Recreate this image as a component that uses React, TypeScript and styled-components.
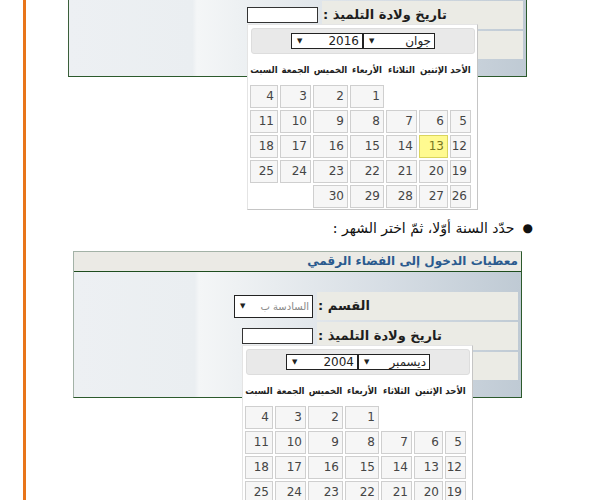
import styled, { createGlobalStyle } from 'styled-components';

const GlobalStyle = createGlobalStyle`
  html, body {
    margin: 0;
    padding: 0;
    background: #fff;
    overflow: hidden;
  }
  body {
    font-family: "DejaVu Sans", "Liberation Sans", sans-serif;
    color: #222;
  }
`;

const Page = styled.div`
  margin-left: 23px;
  border-left: 3px solid #e8751a;
  height: 500px;
  overflow: hidden;
`;

const Shot = styled.div<{ $left: number; $width: number; $tail: number; $top?: number }>`
  margin-left: ${p => p.$left}px;
  margin-top: ${p => p.$top ?? 0}px;
  width: ${p => p.$width}px;
  padding-bottom: ${p => p.$tail}px;
`;

const Panel = styled.div<{ $edge: string; $cut?: boolean }>`
  direction: rtl;
  border: 1px solid #2c5a2c;
  border-left-color: ${p => p.$edge};
  border-top: ${p => (p.$cut ? 'none' : `1px solid ${p.$edge}`)};
  background: linear-gradient(
    to right,
    #edf0f3 0%,
    #eaeef1 27%,
    #f4f6f7 28%,
    #e8ecef 45%,
    #d6dde4 70%,
    #bfcad4 100%
  );
`;

const PanelHead = styled.div`
  height: 19px;
  line-height: 19px;
  padding-right: 3px;
  background: #ebeae5;
  border-bottom: 1px solid #1e4d1e;
  color: #2a5a8e;
  font-size: 12px;
  font-weight: bold;
`;

const PanelBody = styled.div<{ $top: number }>`
  display: flex;
  flex-direction: column;
  gap: 2px;
  padding: ${p => p.$top}px 3px 17px 0;
`;

const Row = styled.div`
  display: flex;
  align-items: center;
  gap: 4px;
  height: 28px;
`;

const LabelCell = styled.div`
  width: 201px;
  height: 100%;
  box-sizing: border-box;
  padding-left: 1px;
  background: #ebebe5;
  text-align: left;
  line-height: 28px;
  font-size: 13px;
  font-weight: bold;
  color: #1e1e1e;
  white-space: nowrap;
`;

const Field = styled.div`
  position: relative;
  display: flex;
`;

const TextBox = styled.div`
  width: 71px;
  height: 16px;
  box-sizing: border-box;
  border: 1px solid #333;
  background: #fff;
`;

const Select = styled.div<{ $w: number; $h: number; $muted?: boolean }>`
  display: flex;
  align-items: center;
  justify-content: space-between;
  width: ${p => p.$w}px;
  height: ${p => p.$h}px;
  box-sizing: border-box;
  padding: 0 3px 0 5px;
  border: 1px solid #222;
  background: #fff;
  color: ${p => (p.$muted ? '#888' : '#222')};
  font-size: ${p => (p.$h > 20 ? 10 : 12)}px;
  white-space: nowrap;
`;

const Arrow = styled.span`
  font-size: 7px;
  color: #222;
`;

const Popup = styled.div`
  position: absolute;
  top: calc(100% + 1px);
  left: 0;
  z-index: 2;
  width: 231px;
  box-sizing: border-box;
  padding: 3px 2px 1px 2px;
  background: #fff;
  border: 1px solid #c5c5c5;
  border-top-color: #e4e4e4;
  border-left-color: #e4e4e4;
`;

const PopHead = styled.div`
  display: flex;
  justify-content: center;
  align-items: center;
  height: 26px;
  box-sizing: border-box;
  margin-left: 1px;
  border: 1px solid #ddd;
  border-radius: 3px;
  background: #e9e9e9;
`;

const COLS = '21px 29px 31px 34px 35px 31px 28px';

const WeekHead = styled.div`
  display: grid;
  grid-template-columns: ${COLS};
  column-gap: 2px;
  width: 221px;
  margin: 6px auto 0 0;
  height: 20px;
  line-height: 20px;
  font-family: "DejaVu Sans Condensed", "DejaVu Sans", sans-serif;
  font-stretch: condensed;
  font-size: 9.5px;
  font-weight: bold;
  color: #222;
`;

const WeekName = styled.div`
  display: flex;
  justify-content: center;
  white-space: nowrap;
`;

const Days = styled.div`
  display: grid;
  grid-template-columns: ${COLS};
  gap: 2px;
  width: 221px;
  margin: 5px auto 0 0;
`;

const Day = styled.div<{ $today?: boolean; $empty?: boolean }>`
  height: 23px;
  box-sizing: border-box;
  padding-right: 3px;
  border: 1px solid ${p => (p.$empty ? 'transparent' : p.$today ? '#dad55e' : '#cfcfcf')};
  background: ${p => (p.$empty ? 'transparent' : p.$today ? '#fffa90' : '#f6f6f6')};
  color: ${p => (p.$today ? '#777620' : '#454545')};
  text-align: right;
  line-height: 21px;
  font-size: 12px;
`;

const Note = styled.div`
  direction: rtl;
  display: flex;
  align-items: center;
  gap: 8px;
  margin-top: 6px;
  padding-right: 62px;
  height: 22px;
  font-family: "DejaVu Serif", "DejaVu Sans", serif;
  font-size: 14px;
  color: #111;
`;

const Dot = styled.span`
  font-size: 12px;
`;

const dayNames = ['الأحد', 'الإثنين', 'الثلاثاء', 'الأربعاء', 'الخميس', 'الجمعة', 'السبت'];

function Calendar({ month, year, first, count, today }: { month: string; year: string; first: number; count: number; today?: number }) {
  const cells: (number | null)[] = [];
  for (let i = 0; i < first; i++) cells.push(null);
  for (let d = 1; d <= count; d++) cells.push(d);
  while (cells.length % 7) cells.push(null);

  return (
    <Popup>
      <PopHead>
        <Select $w={72} $h={16}>{month}<Arrow>▼</Arrow></Select>
        <Select $w={72} $h={16}>{year}<Arrow>▼</Arrow></Select>
      </PopHead>
      <WeekHead>
        {dayNames.map(n => <WeekName key={n}>{n}</WeekName>)}
      </WeekHead>
      <Days>
        {cells.map((d, i) => (
          <Day key={i} $empty={d === null} $today={d === today}>{d ?? ''}</Day>
        ))}
      </Days>
    </Popup>
  );
}

export default function App() {
  return (
    <>
      <GlobalStyle />
      <Page>
        <Shot $left={42} $width={459} $tail={134}>
          <Panel $edge="#3a5f3a" $cut>
            <PanelBody $top={1}>
              <Row>
                <LabelCell>تاريخ ولادة التلميذ :</LabelCell>
                <Field>
                  <TextBox />
                  <Calendar month="جوان" year="2016" first={3} count={30} today={13} />
                </Field>
              </Row>
              <Row>
                <LabelCell />
              </Row>
            </PanelBody>
          </Panel>
        </Shot>

        <Note>
          <Dot>●</Dot>
          <span>حدّد السنة أوّلا، ثمّ اختر الشهر :</span>
        </Note>

        <Shot $left={47} $width={449} $tail={0} $top={12}>
          <Panel $edge="#a3b2a7">
            <PanelHead>معطيات الدخول إلى الفضاء الرقمي</PanelHead>
            <PanelBody $top={20}>
              <Row>
                <LabelCell>القسم :</LabelCell>
                <Field>
                  <Select $w={79} $h={23} $muted>السادسة ب<Arrow>▼</Arrow></Select>
                </Field>
              </Row>
              <Row>
                <LabelCell>تاريخ ولادة التلميذ :</LabelCell>
                <Field>
                  <TextBox />
                  <Calendar month="ديسمبر" year="2004" first={3} count={31} />
                </Field>
              </Row>
              <Row>
                <LabelCell />
              </Row>
            </PanelBody>
          </Panel>
        </Shot>
      </Page>
    </>
  );
}
